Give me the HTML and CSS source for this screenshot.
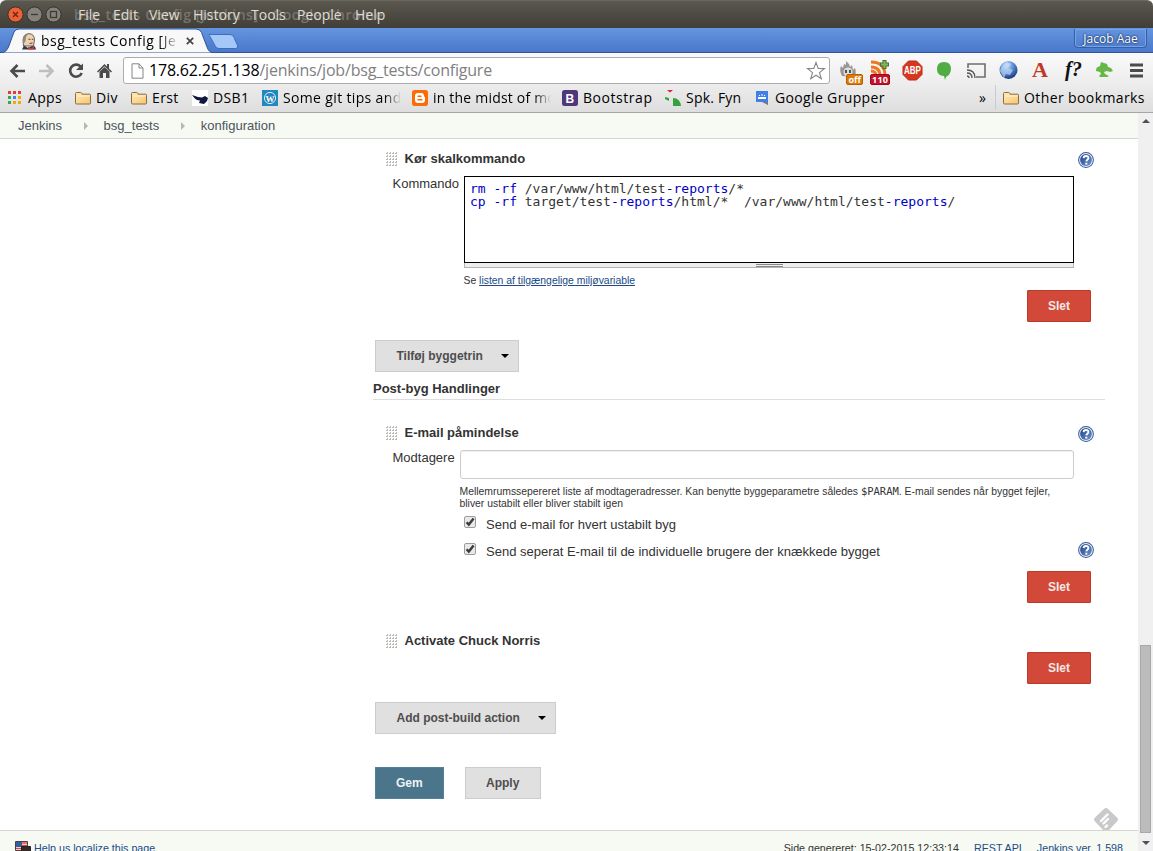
FILE: index.html
```html
<!DOCTYPE html>
<html lang="da">
<head>
<meta charset="utf-8">
<title>bsg_tests Config [Jenkins]</title>
<link rel="stylesheet" href="styles.css">
</head>
<body>
<svg class="defs" width="0" height="0">
  <defs>
    <linearGradient id="blue" x1="0" y1="0" x2="1" y2="1"><stop offset="0" stop-color="#1f4480"/><stop offset="1" stop-color="#6d95cf"/></linearGradient>
    <linearGradient id="folderfill" x1="0" y1="0" x2="1" y2="1"><stop offset="0" stop-color="#ffe9b8"/><stop offset="1" stop-color="#f9c670"/></linearGradient>
    <radialGradient id="globefill" cx=".4" cy=".25" r=".8"><stop offset="0" stop-color="#d5e6fb"/><stop offset=".45" stop-color="#5b8fd8"/><stop offset="1" stop-color="#122f70"/></radialGradient>
    <symbol id="help" viewBox="0 0 16 16"><circle cx="8" cy="8" r="7.9" fill="#33599a"/><circle cx="8" cy="8" r="6.9" fill="#e8eef7"/><circle cx="8" cy="8" r="5.9" fill="url(#blue)"/><path d="M5.600 6.100C5.700 3.200 10.500 3.300 10.400 6c0 1.700-2 1.700-2.100 3.400" fill="none" stroke="#fff" stroke-width="1.900"/><rect x="7.300" y="10.700" width="2" height="1.900" fill="#fff"/></symbol>
    <symbol id="folder" viewBox="0 0 16 14"><path d="M.5 12V2.500q0-1 1-1h4.200q.8 0 1.100 1l.2.7h7.500q1 0 1 1V12q0 1-1 1h-13q-1 0-1-1z" fill="url(#folderfill)" stroke="#8f6a3b"/><path d="M1.500 5h13" stroke="#fff3d2"/></symbol>
    <pattern id="dots" width="3" height="3" patternUnits="userSpaceOnUse"><path d="M1 0h1v2H0V1h1z" fill="#b9b9b4"/></pattern>
    <symbol id="grip" viewBox="0 0 12 14"><rect width="12" height="14" fill="url(#dots)"/></symbol>
    <symbol id="check" viewBox="0 0 12 12"><rect x=".5" y=".5" width="11" height="11" rx="1.500" fill="#e9e9e9" stroke="#9c9c9c"/><path d="M2.600 6.200l2.200 2.400L9.600 2.600" fill="none" stroke="#3b3b3b" stroke-width="2.400"/></symbol>
  </defs>
</svg>

<header class="titlebar">
  <svg class="window-buttons" width="62" height="28" viewBox="0 0 62 28">
    <circle cx="15.500" cy="14.500" r="7.600" fill="#ec6236" stroke="#37332c"/><path d="M13 12l5 5m0-5l-5 5" stroke="#6d2713" stroke-width="1.500"/>
    <circle cx="34.500" cy="14.500" r="7.600" fill="#84827a" stroke="#33312c"/><path d="M31 14.500h7" stroke="#3d3b36" stroke-width="1.300"/>
    <circle cx="53.500" cy="14.500" r="7.600" fill="#84827a" stroke="#33312c"/><rect x="50.500" y="11.500" width="6" height="6" fill="none" stroke="#3d3b36" stroke-width="1.300"/>
  </svg>
  <div class="window-title">bsg_tests Config [Jenkins] - Google Chrome</div>
  <nav class="menu"><span>File</span><span>Edit</span><span>View</span><span>History</span><span>Tools</span><span>People</span><span>Help</span></nav>
</header>

<div class="tabstrip">
  <svg class="tab-shapes" width="250" height="25" viewBox="0 0 250 25">
    <path d="M0 25q6 0 8.500-6L14 4q1.500-3 5-3H196q4 0 5.500 3.500L207 19q2 6 7 6z" fill="#f8f8f8" stroke="#2f5596"/>
    <path d="M209 6.500h21q3 0 4 3l3.500 8q1 3-2 3H219q-3 0-4-3l-5-9q-2-2-1-2z" fill="#a4c8f7" stroke="#3e6dba"/>
  </svg>
  <div class="tab">
    <svg width="16" height="17" viewBox="0 0 16 17"><path d="M2.500 13L2 7Q2.500 1 8 .6q5.500.4 5.500 6.400l-1 6z" fill="#ecd0b0" stroke="#4b4038" stroke-width=".8"/><path d="M2 7Q2 1 7 .8L5 4l-.5 4-1 2z" fill="#8f877e"/><path d="M7.500 6.300h2m1.300 0h1.500M8.500 10.500l3-.5" stroke="#59443a"/><path d="M1 16.500l2-4 4 2.500 4-2 3 .5 1 3z" fill="#273d4e"/><path d="M7 14l3 1 3-1.500v3H7z" fill="#d33833"/></svg>
    <span class="tab-title">bsg_tests Config [Je</span>
    <svg class="tab-close" width="8" height="8" viewBox="0 0 8 8"><path d="M.8.8l6.400 6.400m0-6.400L.8 7.200" stroke="#444" stroke-width="1.700"/></svg>
  </div>
  <div class="profile">Jacob Aae</div>
</div>

<div class="toolbar">
  <svg class="nav-icons" width="120" height="32" viewBox="0 0 120 32">
    <path d="M25 18H12m5.500-6l-6 6 6 6" fill="none" stroke="#4b4b4b" stroke-width="2.600"/>
    <path d="M39 18h13m-5.500-6l6 6-6 6" fill="none" stroke="#bebebe" stroke-width="2.600"/>
    <path d="M80.500 13.500a6 6 0 1 0 1.200 6.500" fill="none" stroke="#4b4b4b" stroke-width="2.600"/><path d="M83 10.500v6.500h-7z" fill="#4b4b4b"/>
    <path d="M97 18.500l7.500-7.500 2.500 2.500V11h2v4.500l3 3-1 1-6.500-6.200-6.500 6.200z" fill="#4b4b4b"/><path d="M99.500 18.500l5-4.600 5 4.600V25h-3.500v-5h-3v5h-3.500z" fill="#4b4b4b"/>
  </svg>
  <div class="omnibox">
    <svg width="13" height="16" viewBox="0 0 13 16"><path d="M1 .8h7L12 5v10.200H1z" fill="#fff" stroke="#858585"/><path d="M8 .8V5h4" fill="none" stroke="#858585"/></svg>
    <span class="url"><b>178.62.251.138</b>/jenkins/job/bsg_tests/configure</span>
    <svg class="star" width="20" height="20" viewBox="0 0 20 20"><path d="M10 1.500l2.200 6 6.300.1-5 4 1.800 6.200L10 14.200l-5.300 3.600 1.800-6.200-5-4 6.300-.1z" fill="#fff" stroke="#858585" stroke-width="1.100"/></svg>
  </div>
  <svg class="extensions" width="315" height="32" viewBox="0 0 315 32">
    <path d="M4 23q-3-6-1-10l2 2 1-4 2 1V8l3 3 1 3 2-2 1 5 2-2q2 5-1 9z" fill="#969696"/><ellipse cx="10" cy="19" rx="4.500" ry="4.500" fill="#dedede"/><path d="M8 17v3m4-3v3" stroke="#222" stroke-width="1.500"/>
    <rect x="8.500" y="21.500" width="16" height="10" rx="1.500" fill="#dd7b08" stroke="#b75e00"/><text class="badge-label" x="10.500" y="30" textLength="12.500">off</text>
    <path d="M33 9q14 0 14 14M33 14q9 0 9 9M33 18q5 0 5 5" fill="none" stroke="#ee7725" stroke-width="3"/><path d="M46.500 7v9m-4.500-4.500h9" stroke="#447329" stroke-width="4"/><path d="M46.500 8v7m-3.500-3.500h7" stroke="#86b663" stroke-width="2"/>
    <rect x="32.500" y="21.500" width="19" height="10" rx="1.500" fill="#c2122b" stroke="#9c0920"/><text class="badge-label" x="34" y="30" textLength="16">110</text>
    <path d="M70.500 8h8l5.500 5.500v8L78.500 27h-8L65 21.500v-8z" fill="#d53820" stroke="#b92b16"/><text class="abp" x="66" y="21" textLength="17" lengthAdjust="spacingAndGlyphs">ABP</text>
    <path d="M106 9q7 0 7 7 0 5-5 8l-1 3-1-4q-7 0-7-7t7-7z" fill="#4fad43"/>
    <path d="M130 15v-4h17v13h-9" fill="none" stroke="#6e6e6e" stroke-width="1.600"/><path d="M129 17q8 0 8 8M129 20q5 0 5 5M129 23q2 0 2 2" fill="none" stroke="#555" stroke-width="1.300"/>
    <circle cx="170.500" cy="17" r="9" fill="url(#globefill)"/><path d="M162 18q2-7 7-9l4 2-3 4 5 2-3 5-4-1-2 4z" fill="#c1daf6" opacity=".65"/>
    <text class="letter-a" x="194" y="24" textLength="16" lengthAdjust="spacingAndGlyphs">A</text><text class="fq" x="227" y="23" textLength="17" lengthAdjust="spacingAndGlyphs">f?</text>
    <path d="M258 17q0-3 4-4l1-4 3 1 3 1 1 3 3 1 2 3-3 1-3-1-3 1 1 2 4 2-2 1h-7l-1-1 2-2-1-2-4-1z" fill="#65b846"/>
    <path d="M292 12h13m-13 5.500h13m-13 5.500h13" stroke="#4b4b4b" stroke-width="2.800"/>
  </svg>
</div>

<div class="bookmarks">
  <div class="bm apps"><svg width="16" height="16" viewBox="0 0 16 16"><path d="M0 1h3v3H0zM5 1h3v3H5zM10 1h3v3h-3z" fill="#e43d30"/><path d="M0 6h3v3H0zM0 11h3v3H0z" fill="#35a853"/><path d="M5 6h3v3H5z" fill="#4285f4"/><path d="M10 6h3v3h-3zM5 11h3v3H5zM10 11h3v3h-3z" fill="#f4a800"/></svg><span>Apps</span></div>
  <div class="bm"><svg width="16" height="14"><use href="#folder"/></svg><span>Div</span></div>
  <div class="bm"><svg width="16" height="14"><use href="#folder"/></svg><span>Erst</span></div>
  <div class="bm"><svg width="16" height="16" viewBox="0 0 16 16"><path fill="#fff" d="M0 0h16v16H0z"/><path d="M0 5l6 2 4 .5L13 6l3 2-1 3-3 3-5-1 1-2.500q-4 0-6-3z" fill="#11173e"/></svg><span>DSB1</span></div>
  <div class="bm"><svg width="16" height="16" viewBox="0 0 16 16"><path fill="#2388bd" d="M0 0h16v16H0z"/><circle cx="8" cy="8" r="5.600" fill="none" stroke="#d7ecf8"/><text class="wp" x="3.500" y="11.500" textLength="9">W</text></svg><span class="fade some">Some git tips and</span></div>
  <div class="bm"><svg width="16" height="16" viewBox="0 0 16 16"><rect width="16" height="16" rx="2.500" fill="#fb6c09"/><path d="M6 3h3q3 0 3 3 0 1 1 1v3q0 3-3 3H6q-3 0-3-3V6q0-3 3-3z" fill="#fff"/><path d="M6 6.200h3M6 9.800h4" stroke="#fb6c09" stroke-width="1.400" stroke-linecap="round"/></svg><span class="fade midst">in the midst of mo</span></div>
  <div class="bm"><svg width="16" height="16" viewBox="0 0 16 16"><rect width="16" height="16" rx="2.500" fill="#503779"/><text class="boot" x="3.500" y="12.500">B</text></svg><span>Bootstrap</span></div>
  <div class="bm"><svg width="16" height="16" viewBox="0 0 16 16"><path d="M2 0h6L5 2.500z" fill="#d82336"/><path d="M0 7l4 1v3l-4-2zM8 8q7 0 8 8H8z" fill="#35a33b"/></svg><span>Spk. Fyn</span></div>
  <div class="bm"><svg width="16" height="16" viewBox="0 0 16 16"><path d="M2 1h12v14l-3-3H2z" fill="#3f7fe8"/><path d="M8 12h6v3z" fill="#777"/><path d="M4 9V7h8v2zM5 5h1v1H5zm2.500-1h1v2h-1zM10 5h1v1h-1z" fill="#fff"/></svg><span>Google Grupper</span></div>
  <span class="more">»</span>
  <div class="bm other"><svg width="16" height="14"><use href="#folder"/></svg><span>Other bookmarks</span></div>
</div>

<div class="viewport">
  <div class="page">
    <nav class="crumbs"><span>Jenkins</span><i></i><span>bsg_tests</span><i></i><span>konfiguration</span></nav>
    <main class="config">
      <section class="step shell">
        <div class="step-head"><svg class="grip" width="12" height="14"><use href="#grip"/></svg><b>Kør skalkommando</b><svg class="help" width="16" height="16"><use href="#help"/></svg></div>
        <div class="field"><label>Kommando</label>
          <div class="field-body"><pre class="editor"><em>rm</em> <em>-rf</em> /var/www/html/test<em>-reports</em>/*
<em>cp</em> <em>-rf</em> target/test<em>-reports</em>/html/*  /var/www/html/test<em>-reports</em>/</pre><div class="resizer"><i></i></div>
          <p class="hint">Se <a>listen af tilgængelige miljøvariable</a></p></div>
        </div>
        <div class="actions"><button class="btn danger">Slet</button></div>
      </section>
      <button class="btn drop add-step"><span>Tilføj byggetrin</span><i></i></button>
      <h2>Post-byg Handlinger</h2>
      <section class="step mail">
        <div class="step-head"><svg class="grip" width="12" height="14"><use href="#grip"/></svg><b>E-mail påmindelse</b><svg class="help" width="16" height="16"><use href="#help"/></svg></div>
        <div class="field"><label>Modtagere</label>
          <div class="field-body"><div class="input"></div>
            <p class="hint">Mellemrumssepereret liste af modtageradresser. Kan benytte byggeparametre således <code>$PARAM</code>. E-mail sendes når bygget fejler,<br>bliver ustabilt eller bliver stabilt igen</p></div>
        </div>
        <div class="check-row"><svg width="12" height="12"><use href="#check"/></svg><span>Send e-mail for hvert ustabilt byg</span></div>
        <div class="check-row"><svg width="12" height="12"><use href="#check"/></svg><span>Send seperat E-mail til de individuelle brugere der knækkede bygget</span><svg class="help" width="16" height="16"><use href="#help"/></svg></div>
        <div class="actions"><button class="btn danger">Slet</button></div>
      </section>
      <section class="step chuck">
        <div class="step-head"><svg class="grip" width="12" height="14"><use href="#grip"/></svg><b>Activate Chuck Norris</b></div>
        <div class="actions"><button class="btn danger">Slet</button></div>
      </section>
      <button class="btn drop add-post"><span>Add post-build action</span><i></i></button>
      <div class="submit"><button class="btn primary">Gem</button><button class="btn apply">Apply</button></div>
      <svg class="feedly" width="26" height="23" viewBox="0 0 26 23"><path d="M11 2q2-2 4 0l9 8.500q2 2 0 4L16 23h-6l-8-8.500q-2-2 0-4z" fill="#c9c9c9"/><path d="M8 14l6.500-6.500M10.500 16.500L15 12M12.500 20l1.500-1.500" stroke="#fff" stroke-width="2.400" stroke-linecap="round"/></svg>
    </main>
    <footer>
      <svg width="16" height="16" viewBox="0 0 16 16"><path fill="#fff" stroke="#444" d="M.5.5h12v9H.5z"/><path fill="#385e9c" d="M1 1h6v5H1z"/><path d="M7 2h5M7 4.500h5M1 7.500h6" stroke="#d44" stroke-width="1.300"/><path fill="#382929" stroke="#222" d="M6.500 5.500h9v9h-9z"/></svg>
      <a class="localize">Help us localize this page</a><span>Side genereret: 15-02-2015 12:33:14</span><a>REST API</a><a>Jenkins ver. 1.598</a>
    </footer>
  </div>
  <div class="scrollbar"><i class="up"></i><div class="thumb"></div><i class="down"></i></div>
</div>
</body>
</html>
```
FILE: styles.css
```css
* { box-sizing: border-box; }
body { margin: 0; width: 1153px; height: 851px; overflow: hidden; display: flex; flex-direction: column; background: #fff; color: #333; font: 13px "Liberation Sans", Arial, sans-serif; }
.defs { position: absolute; }
p, h2, pre { margin: 0; }
svg { flex: none; display: block; }

/* Window frame */
.titlebar { height: 28px; flex: none; position: relative; background: linear-gradient(#5b584f, #403e38); border-top: 1px solid #6b6860; border-radius: 6px 6px 0 0; font: 14px/27px "Open Sans", sans-serif; display: flex; }
.window-buttons { margin-top: -1px; }
.window-title { position: absolute; left: 74px; top: 0; color: #77746b; font-weight: 600; white-space: nowrap; letter-spacing: .55px; }
.menu { position: relative; display: grid; grid-template-columns: 35px 36px 44px 58px 46px 58px 40px; margin-left: 16px; color: #dfdbd2; }
.tabstrip { height: 25px; flex: none; position: relative; background: linear-gradient(#6594df, #4a78cb); border-bottom: 1px solid #2f5596; display: flex; justify-content: space-between; }
.tab-shapes { position: absolute; left: 0; top: 0; }
.tab { position: relative; display: flex; align-items: center; padding-left: 21px; height: 26px; color: #000; font: 14px/26px "Open Sans", sans-serif; }
.tab-title { width: 138px; margin-left: 4px; overflow: hidden; white-space: nowrap; letter-spacing: .5px; -webkit-mask-image: linear-gradient(90deg, #000 86%, transparent); mask-image: linear-gradient(90deg, #000 86%, transparent); }
.tab-close { margin-left: 7px; }
.profile { width: 73px; height: 19px; margin: 1px 6px 0 0; border: 1px solid #3560a8; border-top: 0; border-radius: 0 0 4px 4px; box-shadow: inset 0 0 0 1px #77a2e6; color: #fff; text-align: center; font: 12px/19px "Open Sans", sans-serif; text-shadow: 0 0 2px #19325f, 0 0 2px #19325f; }
.toolbar { height: 32px; flex: none; display: flex; background: linear-gradient(#fafafa, #ececec); }
.nav-icons { margin-right: 3px; }
.omnibox { width: 707px; height: 27px; margin-top: 4px; display: flex; align-items: center; padding: 0 3px 0 7px; background: #fff; border: 1px solid #acacac; border-radius: 3px; }
.url { margin: -2px 0 0 5px; flex: 1; color: #808080; white-space: nowrap; font: 16px/24px "Open Sans", sans-serif; letter-spacing: -.2px; }
.url b { font-weight: 400; color: #000; }
.extensions { margin-left: 8px; }
.badge-label { font: bold 9px "Open Sans", sans-serif; fill: #fff; }
.abp { font: bold 10px "Liberation Sans", sans-serif; fill: #fff; }
.letter-a { font: bold 20px "Liberation Serif", serif; fill: #bd3b28; }
.fq { font: italic bold 21px "Liberation Serif", serif; fill: #111; }
.wp { font: bold 9px "Liberation Serif", serif; fill: #fff; }
.boot { font: bold 12px "Liberation Sans", sans-serif; fill: #fff; }
.bookmarks { height: 28px; flex: none; display: grid; grid-template-columns: 67px 56px 61px 70px 150px 150px 103px 89px 225px 16px 1fr; align-items: center; padding: 0 0 2px 8px; background: linear-gradient(#ececec, #dedede); border-bottom: 1px solid #a6a6a6; color: #000; font: 14px/25px "Open Sans", sans-serif; letter-spacing: .35px; }
.bm { display: flex; align-items: center; gap: 5px; white-space: nowrap; }
.apps { gap: 4px; }
.fade { width: 118px; overflow: hidden; -webkit-mask-image: linear-gradient(90deg, #000 86%, transparent); mask-image: linear-gradient(90deg, #000 86%, transparent); }
.midst { letter-spacing: .2px; }
.bm:nth-child(7) { letter-spacing: .55px; }
.bm:nth-child(8) { letter-spacing: .2px; }
.other { border-left: 1px solid #c5ccd6; padding-left: 7px; letter-spacing: .4px; }

/* Jenkins page */
.viewport { flex: 1; min-height: 0; display: flex; }
.page { width: 1138px; display: flex; flex-direction: column; }
.crumbs { height: 26px; flex: none; display: flex; align-items: center; padding-left: 18px; background: #f6faf2; border-bottom: 1px solid #d3d7cf; color: #4d545d; }
.crumbs i { border: 4px solid transparent; border-left-color: #b5b8b1; border-right: 0; margin: 1px 15.500px 0 22px; }
.config { height: 691px; flex: none; padding-left: 373px; position: relative; }
.step { width: 732px; padding: 0 14px 0 13px; }
.step-head { height: 16px; display: flex; align-items: center; }
.step-head b { margin-left: 6.500px; line-height: 16px; }
.grip { margin-top: -1px; }
.help { margin: 1px -3px 0 auto; }
.config > .shell { padding-top: 12px; }
.field { display: flex; padding-left: 6.500px; }
.field label { line-height: 16px; }
.shell .field { margin-top: 9px; }
.shell .field label { width: 71.500px; }
.field-body { flex: none; }
.editor { width: 610px; height: 87px; border: 1px solid #000; padding: 5px; background: #fff; color: #333; font: 13px/13px "DejaVu Sans Mono", monospace; }
.editor em { font-style: normal; color: #0000c4; }
.resizer { height: 5px; background: #eee; border: 1px solid #b5b5ad; border-top: 0; }
.resizer i { display: block; width: 27px; height: 3px; margin: 0 auto; border: solid #888; border-width: 1px 0; position: relative; top: 1px; }
.hint { font-size: 10.400px; line-height: 12px; }
.shell .hint { margin: 7px 0 0 -.5px; }
.hint a { color: #204a87; text-decoration: underline; }
.actions { display: flex; justify-content: flex-end; }
.shell .actions { margin-top: 3px; }
.btn { height: 32px; padding: 0 20px; border: 1px solid #ccc; background: #e0e0e0; color: #4d4d4d; font: bold 12px "Liberation Sans", Arial, sans-serif; display: flex; align-items: center; justify-content: center; white-space: nowrap; }
.danger { width: 64px; background: #d24939; border-color: #bd3a2b; color: #f3e8e7; border-radius: 1px; }
.drop { justify-content: space-between; margin-left: 2px; padding: 0 9px 0 20.500px; }
.drop i { border: 4px solid transparent; border-top-color: #000; border-bottom: 0; }
.add-step { width: 144px; margin-top: 18px; }
h2 { width: 732px; height: 28px; border-bottom: 1px solid #ddd; font-size: 13px; line-height: 33px; }
.mail { padding-top: 25px; }
.mail .field { margin-top: 9px; }
.mail .field label { width: 67.500px; }
.input { width: 614px; height: 29px; border: 1px solid #ccc; border-radius: 3px; box-shadow: inset 0 1px 1px #eee; }
.mail .hint { margin: 7px 0 -1px -.5px; }
.hint code { font: 10.500px "DejaVu Sans Mono", monospace; line-height: 10px; }
.check-row { height: 27px; display: flex; align-items: center; padding-left: 78px; }
.check-row svg:first-child { margin-top: -1px; }
.check-row span { margin: 4px 0 0 10px; }
.check-row .help { margin-top: 1px; }
.mail .actions { margin-top: 8px; }
.chuck { padding-top: 30px; }
.chuck .actions { margin-top: 3px; }
.add-post { width: 181px; margin-top: 18px; }
.submit { display: flex; gap: 21px; margin: 33px 0 0 2px; }
.apply { width: 76px; }
.primary { background: #4b758b; border-color: #52829a; color: #eef2f4; }
.feedly { position: absolute; right: 19px; bottom: 0; }
footer { flex: none; height: 34px; border-top: 1px solid #d3d7cf; background: #f6faf2; display: flex; padding: 9px 15px 0; gap: 15px; font-size: 10.700px; line-height: 16px; }
footer a { color: #204a87; }
footer svg { margin-top: 1px; }
footer .localize { margin-left: -12px; margin-right: auto; text-decoration: underline; }
.scrollbar { width: 15px; background: #f0f0f0; padding: 6px 0 6px 2px; display: flex; flex-direction: column; }
.thumb { width: 11px; height: 188px; margin-top: auto; background: #bcbcbc; border: 1px solid #a8a8a8; }
.up, .down { border: 4px solid transparent; width: 8px; margin-left: 2px; }
.up { border-bottom-color: #505050; border-top: 0; }
.down { border-top-color: #505050; border-bottom: 0; margin-top: 8px; }
```
